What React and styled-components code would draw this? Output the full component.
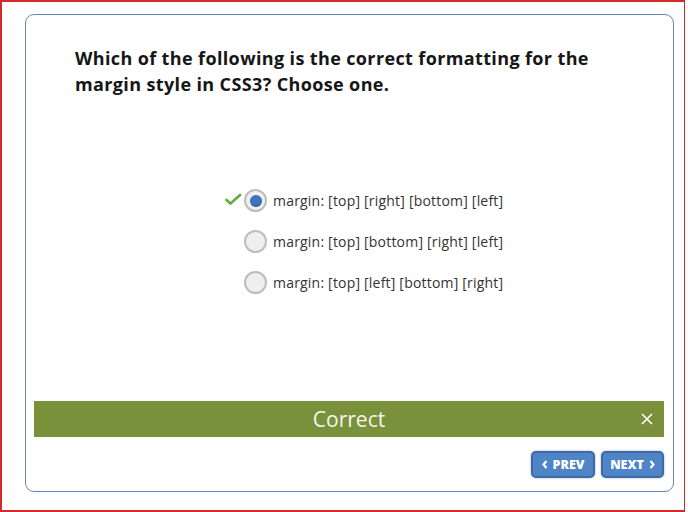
import React from 'react';
import styled, { createGlobalStyle } from 'styled-components';

const GlobalStyle = createGlobalStyle`
  html, body {
    margin: 0;
    padding: 0;
    background: #ffffff;
  }
  body {
    font-family: "Open Sans", "Liberation Sans", sans-serif;
  }
`;

const Frame = styled.div`
  box-sizing: border-box;
  width: 685px;
  height: 512px;
  border: 2px solid #d42a2a;
  border-right-width: 1px;
  padding: 12px 0 0 23px;
`;

const Card = styled.div`
  box-sizing: border-box;
  width: 649px;
  height: 478px;
  border: 1px solid #6a87b1;
  border-radius: 9px;
  display: flex;
  flex-direction: column;
  padding-top: 30px;
`;

const Question = styled.h2`
  margin: 0 0 0 49px;
  font-size: 18px;
  line-height: 26px;
  font-weight: 700;
  color: #161616;
  letter-spacing: 0.37px;
`;

const Options = styled.ul`
  list-style: none;
  margin: 83px 0 0 218px;
  padding: 0;
`;

const Option = styled.li`
  position: relative;
  display: flex;
  align-items: center;
  height: 41px;
  gap: 6px;
  font-size: 14px;
  letter-spacing: 0.2px;
  color: #333;
`;

const Check = styled.svg`
  position: absolute;
  left: -19px;
  top: 13px;
`;

const Radio = styled.span`
  box-sizing: border-box;
  width: 23px;
  height: 23px;
  border-radius: 50%;
  border: 2.5px solid #bdbdbd;
  background: #efefef;
  display: flex;
  align-items: center;
  justify-content: center;
  &::after {
    content: '';
    display: ${p => (p.$checked ? 'block' : 'none')};
    width: 12px;
    height: 12px;
    border-radius: 50%;
    background: #3f73c4;
    box-shadow: inset 0 -1px 2px rgba(0, 0, 0, 0.25);
  }
`;

const Feedback = styled.div`
  position: relative;
  margin: 98px 9px 0 8px;
  height: 36px;
  background: #79913a;
  color: #f4f6ec;
  font-size: 21px;
  line-height: 36px;
  text-align: center;
`;

const Close = styled.svg`
  position: absolute;
  right: 11px;
  top: 12px;
`;

const Nav = styled.div`
  display: flex;
  justify-content: flex-end;
  gap: 6px;
  margin: 14px 9px 0 0;
`;

const NavButton = styled.button`
  box-sizing: border-box;
  height: 27px;
  width: ${p => p.$w}px;
  border: 2px solid #3d6aa6;
  border-radius: 5px;
  background: #4f84c6;
  box-shadow: 0 0 2px rgba(40, 70, 120, 0.5);
  color: #ffffff;
  font-family: "Open Sans", "Liberation Sans", sans-serif;
  font-size: 12.5px;
  font-weight: 800;
  display: flex;
  align-items: center;
  justify-content: center;
  gap: 5px;
  padding: 0;
`;

const Chevron = ({ dir }) => (
  <svg width="6" height="9" viewBox="0 0 6 9">
    <path
      d={dir === 'left' ? 'M4.5 1 L1.5 4.5 L4.5 8' : 'M1.5 1 L4.5 4.5 L1.5 8'}
      fill="none"
      stroke="#fff"
      strokeWidth="2.2"
    />
  </svg>
);

const choices = [
  'margin: [top] [right] [bottom] [left]',
  'margin: [top] [bottom] [right] [left]',
  'margin: [top] [left] [bottom] [right]',
];

export default function App() {
  return (
    <>
      <GlobalStyle />
      <Frame>
        <Card>
          <Question>
            Which of the following is the correct formatting for the
            <br />
            margin style in CSS3? Choose one.
          </Question>
          <Options>
            {choices.map((c, i) => (
              <Option key={c}>
                {i === 0 && (
                  <Check width="17" height="13" viewBox="0 0 17 13">
                    <path
                      d="M1.5 7 L5.5 10.5 L15 2"
                      fill="none"
                      stroke="#62ad45"
                      strokeWidth="2.8"
                      strokeLinecap="round"
                      strokeLinejoin="round"
                    />
                  </Check>
                )}
                <Radio $checked={i === 0} />
                {c}
              </Option>
            ))}
          </Options>
          <Feedback>
            Correct
            <Close width="12" height="12" viewBox="0 0 12 12">
              <path d="M1 1 L11 11 M11 1 L1 11" stroke="#fff" strokeWidth="1.6" />
            </Close>
          </Feedback>
          <Nav>
            <NavButton $w={64}>
              <Chevron dir="left" />
              PREV
            </NavButton>
            <NavButton $w={63}>
              NEXT
              <Chevron dir="right" />
            </NavButton>
          </Nav>
        </Card>
      </Frame>
    </>
  );
}
